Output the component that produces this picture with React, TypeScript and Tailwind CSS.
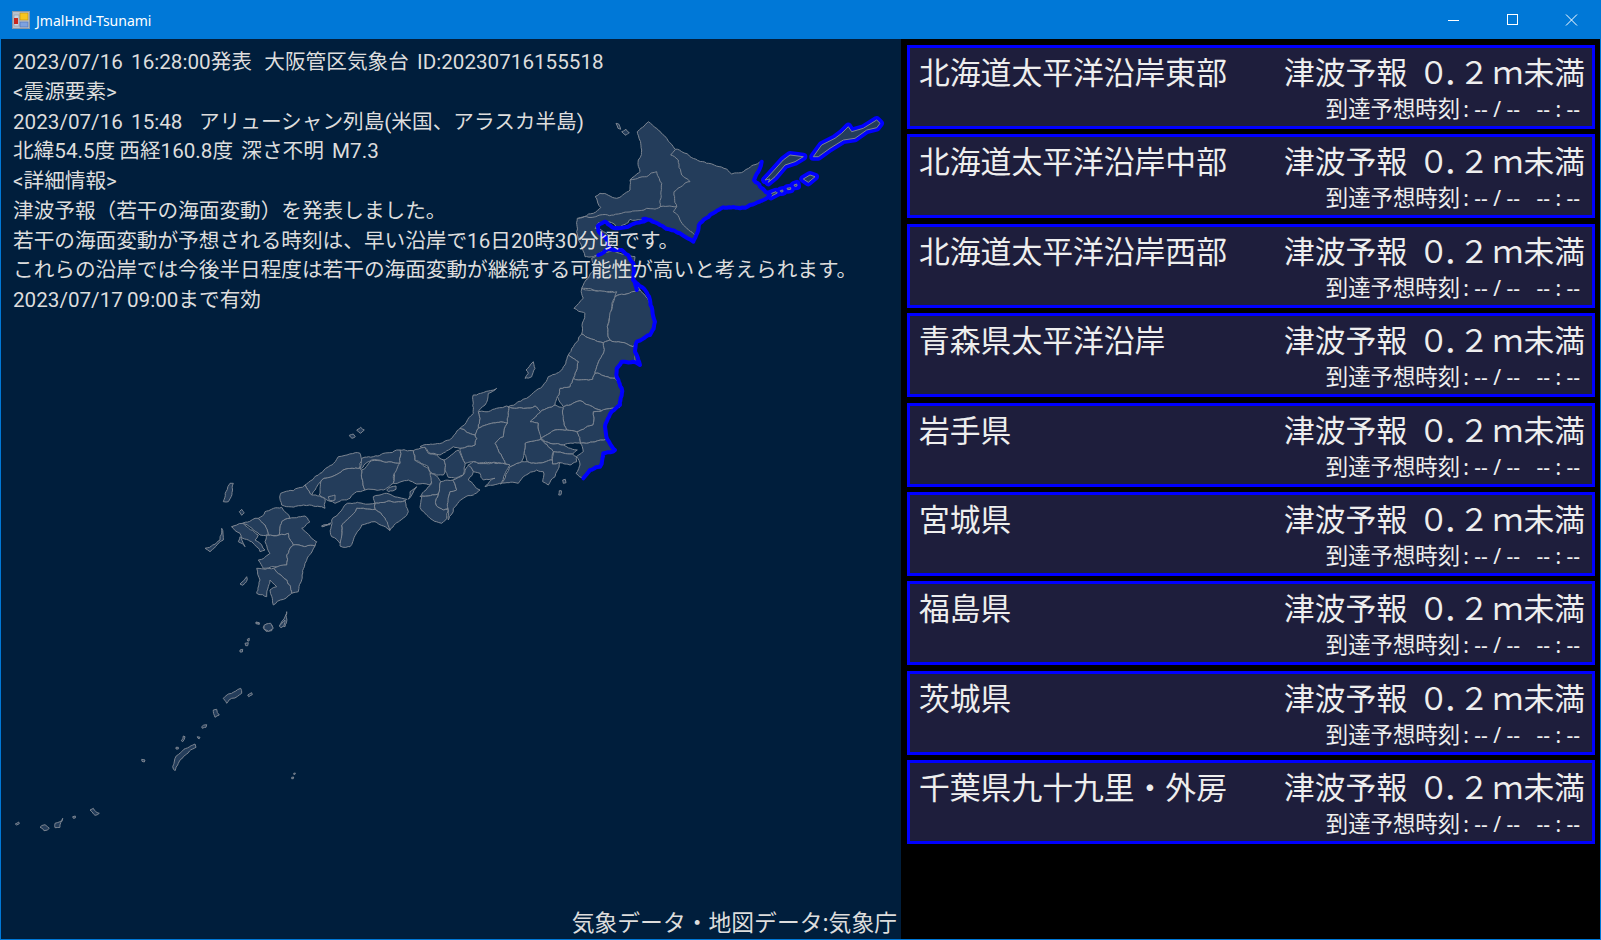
const Z3 = [550, 100];
const Z4 = [420, 280];
const Z5 = [190, 420];
const Z6 = [0, 620];
const Z9 = [565, 200];
const Z10 = [740, 105];
const Z11 = [400, 420];
const Z12 = [260, 440];

// coordinates are read off 3x crops, so each block has its crop origin
type Shape = [number[], string];

const noise = (x: number, y: number) => {
  const v = Math.sin(x * 12.9898 + y * 78.233) * 43758.5453;
  return v - Math.floor(v) - 0.5;
};

// wiggle long edges so coasts and borders aren't straight; the offset comes
// from the midpoint only, so two shapes sharing an edge wiggle the same way
const wiggle = (a: number[], b: number[]): number[][] => {
  const len = Math.hypot(b[0] - a[0], b[1] - a[1]);
  if (len < 3.5) return [];
  const mx = Math.round(((a[0] + b[0]) / 2) * 10) / 10;
  const my = Math.round(((a[1] + b[1]) / 2) * 10) / 10;
  const amp = Math.min(len * 0.22, 2.4);
  const m = [mx + noise(mx, my) * amp, my + noise(my, mx) * amp];
  return [...wiggle(a, m), m, ...wiggle(m, b)];
};

const toPoints = ([ox, oy]: number[], d: string, closed = true, rough = true) => {
  const pts = d
    .trim()
    .split(/\s+/)
    .map((p) => {
      const [x, y] = p.split(",").map(Number);
      return [ox + x / 3, oy + y / 3];
    });
  const out: number[][] = [];
  pts.forEach((p, i) => {
    out.push(p);
    const next = i === pts.length - 1 ? (closed ? pts[0] : null) : pts[i + 1];
    if (next && rough) out.push(...wiggle(p, next));
  });
  return out.map((p) => `${p[0].toFixed(1)},${p[1].toFixed(1)}`).join(" ");
};

const land: Shape[] = [
  // hokkaido
  [Z3, "295,65 320,85 350,115 375,148 420,170 470,190 530,207 545,222 580,215 610,195 635,185 625,215 612,240 630,260 660,285 640,300 600,315 570,325 520,322 480,345 450,370 430,425 390,400 330,375 280,357 240,358 205,385 175,365 145,368 135,385 160,395 195,425 170,445 130,470 105,470 95,440 80,395 82,355 130,340 152,322 135,290 150,280 200,295 240,270 240,240 270,215 265,180 275,150 262,95"],
  // tohoku
  [Z3, "125,475 150,460 190,450 235,465 255,470 248,540 270,570 190,590 190,575 95,565 115,535 130,510"],
  [Z4, "485,25 590,35 580,60 562,140 570,180 550,188 485,162 495,100 462,85 490,55"],
  [Z4, "585,50 660,30 685,60 705,125 690,165 650,185 640,200 570,180 562,140"],
  [Z4, "485,162 550,188 552,215 525,280 518,298 460,295 475,245 445,225 460,200"],
  [Z4, "570,180 640,200 650,185 645,240 660,255 640,245 605,245 590,265 585,295 525,280 552,215 550,188"],
  [Z4, "460,295 518,298 525,280 585,295 605,325 600,380 575,385 545,392 518,380 480,362 430,380 412,350 420,325 450,320"],
  [Z4, "445,225 475,245 460,295 450,320 420,325 412,350 405,375 362,395 345,378 315,385 290,385 265,380 320,355 370,315 385,290 425,270"],
  // kanto
  [Z4, "545,392 575,385 600,380 575,395 555,440 562,478 480,490 470,455 518,435 520,395"],
  [Z4, "430,380 480,362 518,380 545,392 520,395 518,435 470,455 440,450 430,420"],
  [Z4, "330,425 362,395 405,375 430,385 430,420 440,450 405,450 362,475 355,430"],
  [Z4, "362,475 405,450 440,450 470,455 482,490 430,495 390,490"],
  [Z4, "362,478 390,490 430,495 472,510 458,522 400,515"],
  [Z4, "480,490 562,478 585,510 550,525 540,560 510,570 490,595 468,580 480,555 470,530 490,515"],
  [Z4, "400,515 458,522 470,530 470,545 450,555 420,548 397,552"],
  [Z4, "315,490 362,478 400,515 397,540 345,550 322,545 312,520"],
  [Z4, "240,612 270,560 305,545 322,545 345,550 397,540 397,552 420,548 405,590 385,615 368,605 370,575 350,570 310,590 295,610"],
  // chubu
  [Z4, "265,380 290,385 315,385 345,378 362,395 330,425 355,430 362,478 315,490 312,520 305,545 270,560 255,550 225,490 250,470 262,430"],
  [Z4, "175,395 205,395 260,378 265,380 262,430 215,430 175,445"],
  [Z4, "120,445 160,400 160,345 230,325 205,340 195,375 175,395 175,445 165,465"],
  [Z4, "120,505 165,495 170,475 165,465 175,445 215,430 262,430 250,470 225,490 255,550 165,545 135,550"],
  [Z4, "88,480 120,445 165,465 170,475 165,495 120,505 100,500 60,525 30,520 18,505 0,500"],
  [Z11, "220,125 300,130 330,135 305,190 255,200 285,175 250,180 240,160 220,155 205,135"],
  // kinki
  [Z11, "-20,130 0,130 0,90 40,92 45,120 85,145 92,160 100,170 90,195 50,192 25,180 -20,190"],
  [Z11, "25,238 30,215 50,200 35,225"],
  [Z11, "40,92 75,82 85,100 110,105 132,120 135,150 130,165 110,165 90,155 85,140 45,122"],
  [Z11, "132,120 165,95 175,90 195,130 190,165 165,175 145,172 135,150"],
  [Z11, "90,160 110,168 122,185 115,222 65,228 60,230 95,190"],
  [Z11, "122,185 158,180 170,210 150,215 145,265 130,270 108,255 115,222"],
  [Z11, "65,228 115,222 108,255 130,270 145,268 140,295 125,310 90,295 60,262"],
  [Z11, "165,178 190,165 205,135 220,155 205,180 240,210 220,225 190,235 160,265 145,300 145,268 150,215 170,210 158,180"],
  // chugoku
  [Z12, "305,55 340,50 410,30 420,30 420,70 370,65 335,60 305,85 300,85"],
  [Z12, "135,135 180,100 235,50 300,40 305,60 298,85 255,88 185,120 155,165"],
  [Z12, "62,160 100,152 135,135 155,165 178,168 195,175 195,205 185,200 130,195 85,200 65,195"],
  [Z12, "178,165 185,120 255,88 298,85 305,90 315,150 290,155 270,175 245,180 225,190 195,175"],
  [Z12, "305,90 335,62 370,65 420,70 400,110 400,130 370,150 315,150"],
  // shikoku
  [Z12, "340,170 380,160 440,178 435,182 345,190"],
  [Z12, "345,190 435,182 445,215 390,270 375,235 345,208"],
  [Z12, "215,240 262,190 345,190 345,208 290,205 245,255 240,310 215,290"],
  [Z12, "345,208 375,235 390,272 345,245 305,255 270,320 240,318 245,255 290,205"],
  // kyushu
  [Z5, "225,275 275,262 300,295 275,305 268,345 235,345 225,315 205,295"],
  [Z5, "275,305 300,295 345,288 360,305 335,325 380,365 375,378 310,375 295,340 268,345"],
  [Z5, "205,295 225,315 235,345 210,345 160,310 140,320 125,320 195,295"],
  [Z5, "125,320 140,315 160,310 205,345 195,360 215,375 225,390 210,395 175,360 150,350 145,365 165,380 150,340"],
  [Z5, "228,345 268,345 295,340 310,375 290,405 290,435 220,445 205,420 240,400 225,365"],
  [Z5, "310,375 375,378 345,430 325,515 305,520 290,480 250,445 290,435 290,405"],
  [Z5, "200,445 250,445 290,480 305,520 250,555 240,510 260,500 240,480 235,500 230,530 200,520 210,480"],
  // small islands
  [Z3, "198,70 206,72 212,88 204,85"],
  [Z3, "215,95 228,88 238,98 228,106"],
  [Z4, "318,270 340,245 345,265 335,290 315,295 325,280"],
  [Z4, "428,600 436,598 438,608 430,610"],
  [Z4, "418,632 424,632 422,645 416,645"],
  [Z5, "100,245 115,245 130,190 120,190 108,215"],
  [Z5, "148,275 155,268 163,278 155,286"],
  [Z5, "45,385 60,395 100,360 95,325 90,360 68,375"],
  [Z5, "150,492 170,470 172,478 158,496"],
  [Z5, "268,618 280,600 290,575 285,620"],
  [Z5, "220,622 230,612 248,618 245,632 228,634"],
  [Z5, "198,606 208,608 208,612 198,610"],
  [Z5, "500,30 512,22 523,30 512,40"],
  [Z5, "478,46 490,42 496,50 486,55"],
  [Z5, "395,318 420,310 420,314 397,320"],
  [Z12, "185,258 210,248 212,250 188,260"],
  [Z12, "205,170 225,165 225,180 208,182"],
  [Z12, "380,150 408,138 408,148 385,155"],
  [Z6, "670,235 685,222 722,205 725,220 695,235 680,250"],
  [Z6, "743,225 755,218 757,224 746,230"],
  [Z6, "640,270 650,268 658,285 645,292"],
  [Z6, "605,320 620,314 618,322 607,325"],
  [Z6, "592,350 600,352 598,356 594,355"],
  [Z6, "518,440 525,415 545,395 585,372 588,382 550,410 535,430 525,452"],
  [Z6, "550,348 555,350 548,365 544,362"],
  [Z6, "528,382 535,382 535,387 528,387"],
  [Z6, "425,418 435,420 433,426 426,424"],
  [Z6, "270,570 280,565 298,580 285,586"],
  [Z6, "218,590 226,588 226,594 220,595"],
  [Z6, "165,610 180,605 188,595 180,622 165,623"],
  [Z6, "120,622 135,614 148,625 132,632"],
  [Z6, "46,612 56,606 58,611 50,615"],
  [Z6, "881,460 886,459 885,463 881,463"],
  [Z6, "875,472 881,471 880,476 875,476"],
  [Z6, "792,16 812,10 820,25 806,34 792,28"],
  [Z6, "838,18 855,0 852,16 843,23"],
  [Z6, "768,8 778,10 778,13 768,11"],
  [Z6, "742,58 748,55 747,63 743,63"],
  [Z6, "735,70 745,68 743,77 737,77"],
  [Z6, "720,90 728,88 727,96 720,96"],
];

const borders: Shape[] = [
  [Z3, "375,150 362,165 385,180 395,225 420,245 372,275 380,320 370,335 400,375 435,405"],
  [Z3, "320,215 335,250 330,320 380,320"],
  [Z3, "320,215 290,230 240,240"],
  [Z3, "330,322 290,325 215,340 110,350 85,355"],
];

const kurils: Shape[] = [
  [Z10, "75,225 85,215 130,165 150,150 190,155 165,170 135,180 105,215 85,232 90,222"],
  [Z10, "220,155 245,120 285,100 305,85 325,65 335,80 370,70 410,45 420,55 410,68 380,75 345,100 310,105 270,130 235,155"],
  [Z10, "190,222 210,210 225,215 205,232"],
  [Z10, "121,257 128,255 129,260 123,261"],
  [Z10, "141,250 152,248 152,253 143,254"],
  [Z10, "162,240 170,237 171,243 164,244"],
  [Z10, "88,268 108,260 112,264 92,274"],
];

const coast: Shape[] = [
  [Z3, "635,185 625,215 612,240 630,260 660,285 640,300 600,315 570,325 520,322 480,345 450,370 430,425 390,400 330,375 280,357"],
  [Z9, "245,60 190,80 150,85 120,65 98,78 100,92 125,115 135,145"],
  [Z9, "100,165 130,145 170,150 190,165 205,190 205,240 215,270"],
  [Z4, "640,0 675,30 690,60 705,125 690,165 650,185 645,215 660,255 640,245 605,245 590,265 590,290 605,325 600,375 575,395 555,440 562,478 585,510 550,520 540,560 510,570 490,595"],
];

function JapanMap() {
  return (
    <svg className="absolute left-0 top-0" width="900" height="900" viewBox="1 39 900 900">
      <g fill="#0000ff" stroke="#0000ff" strokeWidth="8" strokeLinejoin="round">
        {kurils.map(([o, d], i) => (
          <polygon key={i} points={toPoints(o, d, true, false)} />
        ))}
      </g>
      <g fill="#243d5b" stroke="#7c8591" strokeWidth="1" strokeLinejoin="round">
        {land.map(([o, d], i) => (
          <polygon key={i} points={toPoints(o, d)} />
        ))}
        {kurils.map(([o, d], i) => (
          <polygon key={i} points={toPoints(o, d, true, false)} />
        ))}
      </g>
      <g fill="none" stroke="#7c8591" strokeWidth="1" strokeLinejoin="round">
        {borders.map(([o, d], i) => (
          <polyline key={i} points={toPoints(o, d, false)} />
        ))}
      </g>
      <g fill="none" stroke="#0000ff" strokeWidth="4" strokeLinejoin="round" strokeLinecap="round">
        {coast.map(([o, d], i) => (
          <polyline key={i} points={toPoints(o, d, false)} />
        ))}
      </g>
    </svg>
  );
}

function AppIcon() {
  return (
    <svg width="18" height="18" viewBox="0 0 18 18" className="mr-[6px]">
      <rect x="0.5" y="0.5" width="17" height="17" fill="#b9c2cc" stroke="#8b97a5" />
      <rect x="2" y="4" width="5" height="11" fill="#c9d4e2" stroke="#7d8ba0" strokeWidth="0.5" />
      <rect x="2" y="7" width="4" height="6" fill="#c8281e" />
      <rect x="8" y="2" width="8" height="7" fill="#f7c51e" stroke="#b98d12" strokeWidth="0.6" />
      <rect x="8" y="11" width="8" height="5" fill="#7ea2e0" stroke="#4c6fb5" strokeWidth="0.6" />
    </svg>
  );
}

function TitleBar() {
  return (
    <div className="flex h-[38px] items-center bg-[#0078d7] pl-[11px] text-white">
      <AppIcon />
      <span className="text-[14px]">JmalHnd-Tsunami</span>
      <div className="ml-auto flex items-center">
        <svg width="58" height="12" viewBox="0 0 58 12">
          <path d="M22 6.5h11" stroke="#fff" fill="none" />
        </svg>
        <svg width="58" height="12" viewBox="0 0 58 12">
          <rect x="23.5" y="0.5" width="10" height="10" stroke="#fff" fill="none" />
        </svg>
        <svg width="58" height="12" viewBox="0 0 58 12">
          <path d="M24 .5l11 11M35 .5l-11 11" stroke="#fff" fill="none" />
        </svg>
      </div>
    </div>
  );
}

const lines = [
  "2023/07/16  16:28:00発表   大阪管区気象台  ID:20230716155518",
  "<震源要素>",
  "2023/07/16  15:48    アリューシャン列島(米国、アラスカ半島)",
  "北緯54.5度 西経160.8度  深さ不明  M7.3",
  "<詳細情報>",
  "津波予報（若干の海面変動）を発表しました。",
  "若干の海面変動が予想される時刻は、早い沿岸で16日20時30分頃です。",
  "これらの沿岸では今後半日程度は若干の海面変動が継続する可能性が高いと考えられます。",
  "2023/07/17 09:00まで有効",
];

const areas = [
  "北海道太平洋沿岸東部",
  "北海道太平洋沿岸中部",
  "北海道太平洋沿岸西部",
  "青森県太平洋沿岸",
  "岩手県",
  "宮城県",
  "福島県",
  "茨城県",
  "千葉県九十九里・外房",
];

function AreaCard({ name }: { name: string }) {
  return (
    <div className="h-[84px] border-[3px] border-[#0000ff] bg-[#1e1e3c] pl-[9px] pr-[7px] text-[#eeeeee]">
      <div className="flex h-[49px] items-center justify-between whitespace-pre text-[30.8px] leading-none">
        <span>{name}</span>
        <span>
          津波予報
          <span className="ml-[11px] tracking-[-6px]">０</span>
          <span className="tracking-[-15px]">．</span>
          <span className="tracking-[3px]">２</span>
          <span className="tracking-[-6px]">ｍ</span>
          <span className="ml-[6px]">未満</span>
        </span>
      </div>
      <div className="-mt-[1px] whitespace-pre pr-[5px] text-right text-[21px] leading-[26px]">
        <span className="mr-[3px] text-[22.4px]">到達予想時刻</span>: -- / --   -- : --
      </div>
    </div>
  );
}

export default function App() {
  return (
    <div className="flex h-[940px] w-[1601px] flex-col overflow-hidden border border-[#0078d7] font-['Noto_Sans','Noto_Sans_CJK_JP',sans-serif]">
      <TitleBar />
      <div className="flex flex-1">
        <div className="relative flex w-[900px] flex-col justify-between bg-[#001e3c] text-[#dddddd]">
          <JapanMap />
          <div className="relative pl-[12px] pt-[9px] font-['Roboto','Noto_Sans_CJK_JP',sans-serif] text-[20.65px] leading-[29.75px] [word-spacing:-1px]">
            {lines.map((l) => (
              <div key={l} className="whitespace-pre">
                {l}
              </div>
            ))}
          </div>
          <div className="relative pr-[4px] text-right text-[22.8px] leading-[32px]">気象データ・地図データ:気象庁</div>
        </div>
        <div className="flex flex-1 flex-col gap-[5.4px] bg-black pl-[6px] pr-[5px] pt-[6px]">
          {areas.map((a) => (
            <AreaCard key={a} name={a} />
          ))}
        </div>
      </div>
    </div>
  );
}
